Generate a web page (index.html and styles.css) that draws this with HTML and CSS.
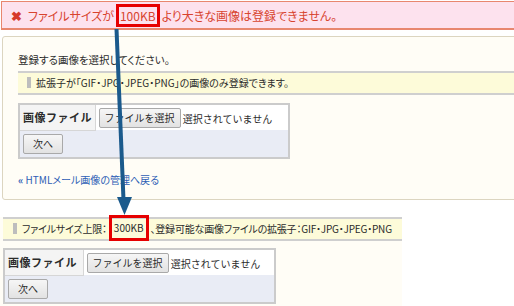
FILE: index.html
```html
<!DOCTYPE html>
<html lang="ja">

<head>
    <meta charset="UTF-8" />
    <title>画像の登録</title>
    <link rel="stylesheet" href="styles.css">
</head>

<body>
    <!-- エラー -->
    <div class="error">
        <span class="mark">✖</span>
        <span>ファイルサイズが</span>
        <span class="hl">100KB</span>
        <span>より大きな画像は登録できません。</span>
    </div>

    <!-- 登録フォーム -->
    <div class="panel">
        <p class="lead">登録する画像を選択してください。</p>
        <div class="note"><span class="bar"></span>拡張子が「GIF・JPG・JPEG・PNG」の画像のみ登録できます。</div>
        <table class="form">
            <tr>
                <th>画像ファイル</th>
                <td><button class="btn">ファイルを選択</button> 選択されていません</td>
            </tr>
            <tr class="foot">
                <td colspan="2"><button class="btn">次へ</button></td>
            </tr>
        </table>
        <a class="back" href="#"><span class="quote">«</span> HTMLメール画像の管理へ戻る</a>
    </div>

    <!-- 変更後 -->
    <div class="after">
        <div class="note note-after"><span class="bar"></span>ファイルサイズ上限：<span class="hl hl-after">300KB</span>、登録可能な画像ファイルの拡張子：GIF・JPG・JPEG・PNG</div>
        <table class="form form-after">
            <tr>
                <th>画像ファイル</th>
                <td><button class="btn">ファイルを選択</button> 選択されていません</td>
            </tr>
            <tr class="foot">
                <td colspan="2"><button class="btn">次へ</button></td>
            </tr>
        </table>
    </div>

    <!-- 矢印 -->
    <svg class="arrow" width="514" height="306" viewBox="0 0 514 306">
        <line x1="116.5" y1="29" x2="123.5" y2="200" stroke="#1b5a8c" stroke-width="4" />
        <polygon points="117,197 132,197 124.5,215" fill="#1b5a8c" />
    </svg>
</body>

</html>
```

FILE: styles.css
```css
* {
    box-sizing: border-box;
    margin: 0;
    padding: 0;
}

body {
    position: relative;
    width: 514px;
    height: 306px;
    overflow: hidden;
    background: #fff;
    color: #2b2b2b;
    font-family: "Noto Sans CJK JP", "Noto Sans", sans-serif;
    font-size: 10px;
    font-feature-settings: "palt";
}

.error {
    display: flex;
    align-items: center;
    gap: 2px;
    width: 530px;
    height: 29px;
    margin: 1px 0 0 1px;
    padding-left: 9px;
    font-size: 12px;
    background: #fde2ee;
    border: 1px solid #e8876f;
    border-bottom-width: 2px;
    color: #d8442f;
}

.mark {
    margin-right: 4px;
    font-size: 13px;
    font-weight: bold;
    color: #d63a2a;
}

.hl {
    display: inline-block;
    padding: 0 1px;
    line-height: 17px;
    border: 3px solid #e60000;
}

.panel {
    width: 530px;
    margin: 6px 0 0 2px;
    padding: 14px 15px 10px;
    background: #fffdf6;
    border: 1px solid #dcd5c0;
    border-radius: 3px;
}

.lead {
    font-size: 10.5px;
    line-height: 18px;
    margin-bottom: 2px;
}

.note {
    height: 24px;
    padding-left: 9px;
    line-height: 20px;
    white-space: nowrap;
    background: #fdfbd9;
    border-top: 2px solid #cfcfcf;
    border-bottom: 2px solid #cfcfcf;
}

.bar {
    display: inline-block;
    width: 4px;
    height: 11px;
    margin-right: 5px;
    vertical-align: -1px;
    background: #bdbdbd;
}

.form {
    width: 272px;
    margin-top: 8px;
    border-collapse: collapse;
    border: 2px solid #cbcbcb;
    background: #fff;
    font-feature-settings: normal;
}

.form th {
    width: 76px;
    height: 26px;
    padding-left: 3px;
    font-size: 11px;
    letter-spacing: 0.5px;
    text-align: left;
    background: #f4f4f4;
    border-right: 1px solid #d6d6d6;
    border-bottom: 1px solid #d6d6d6;
}

.form td {
    padding-left: 3px;
    white-space: nowrap;
}

.form .foot td {
    height: 28px;
    background: #e9ecf5;
}

.btn {
    height: 20px;
    padding: 0 5px;
    font-family: inherit;
    font-size: 10px;
    color: #2b2b2b;
    background: linear-gradient(#f6f6f6, #e2e2e2);
    border: 1px solid #a9a9a9;
    border-radius: 2px;
}

.foot .btn {
    padding: 0 9px;
}

.back {
    display: block;
    margin-top: 12px;
    line-height: 18px;
    color: #2e5db5;
    text-decoration: none;
}

.quote {
    font-weight: bold;
}

.after {
    width: 402px;
    height: 91px;
    margin-top: 17px;
    padding-left: 3px;
    background: #fffdf6;
}

.note-after {
    padding-left: 10px;
    letter-spacing: -0.2px;
}

.hl-after {
    position: relative;
    top: -1px;
    height: 26px;
    margin: -3px 2px;
    padding: 0 2px;
    line-height: 20px;
    letter-spacing: 0;
    vertical-align: top;
}

.form-after {
    width: 273px;
    margin-top: 7px;
}

.form-after th {
    width: 79px;
}

.arrow {
    position: absolute;
    top: 0;
    left: 0;
}
```
